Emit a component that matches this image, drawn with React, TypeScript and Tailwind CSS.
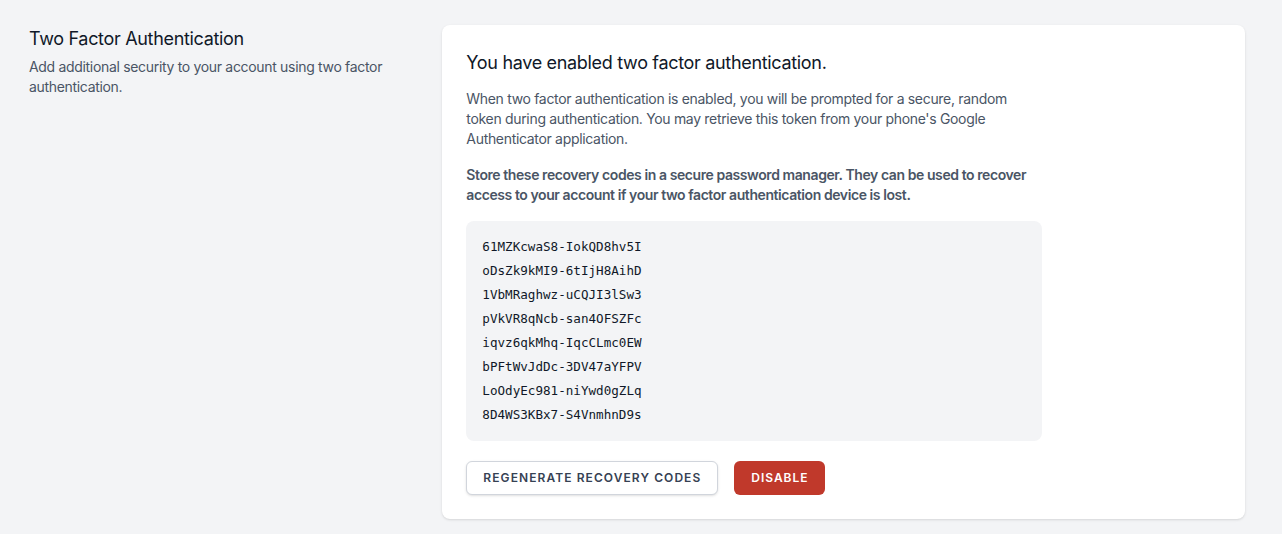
import React from "react";

const codes = [
  "61MZKcwaS8-IokQD8hv5I",
  "oDsZk9kMI9-6tIjH8AihD",
  "1VbMRaghwz-uCQJI3lSw3",
  "pVkVR8qNcb-san4OFSZFc",
  "iqvz6qkMhq-IqcCLmc0EW",
  "bPFtWvJdDc-3DV47aYFPV",
  "LoOdyEc981-niYwd0gZLq",
  "8D4WS3KBx7-S4VnmhnD9s",
];

export default function App() {
  return (
    <div className="min-h-screen bg-[#f3f4f6] font-['Inter',sans-serif] tracking-[-0.02em]">
      <div className="pl-[29px] pr-[37px] pt-[25px] pb-[15px]">
        <div className="grid grid-cols-3 gap-6">
          <div className="col-span-1">
            <h3 className="text-lg font-normal text-gray-900">Two Factor Authentication</h3>
            <p className="mt-1 text-sm text-gray-600 pr-4">
              Add additional security to your account using two factor authentication.
            </p>
          </div>
          <div className="col-span-2">
            <div className="bg-white p-6 rounded-lg shadow">
              <h3 className="text-lg font-normal text-gray-900">
                You have enabled two factor authentication.
              </h3>
              <div className="mt-3 max-w-xl text-sm text-gray-600">
                <p>
                  When two factor authentication is enabled, you will be prompted for a secure, random
                  token during authentication. You may retrieve this token from your phone's Google
                  Authenticator application.
                </p>
              </div>
              <div className="mt-4 max-w-xl text-sm text-gray-600">
                <p className="font-semibold tracking-[-0.03em]">
                  Store these recovery codes in a secure password manager. They can be used to recover
                  access to your account if your two factor authentication device is lost.
                </p>
              </div>
              <div className="grid gap-1 max-w-xl mt-4 px-4 py-4 [font-family:'DejaVu_Sans_Mono',monospace] tracking-normal text-[12.6px] leading-5 text-gray-900 bg-gray-100 rounded-lg">
                {codes.map((c) => (
                  <div key={c}>{c}</div>
                ))}
              </div>
              <div className="mt-5 flex gap-4">
                <button className="inline-flex items-center px-4 py-2 bg-white border border-gray-300 rounded-md font-semibold text-xs text-gray-700 uppercase tracking-[0.09em] shadow-sm">
                  Regenerate Recovery Codes
                </button>
                <button className="inline-flex items-center px-4 py-2 bg-[#c0392b] border border-transparent rounded-md font-semibold text-xs text-white uppercase tracking-[0.08em]">
                  Disable
                </button>
              </div>
            </div>
          </div>
        </div>
      </div>
    </div>
  );
}
